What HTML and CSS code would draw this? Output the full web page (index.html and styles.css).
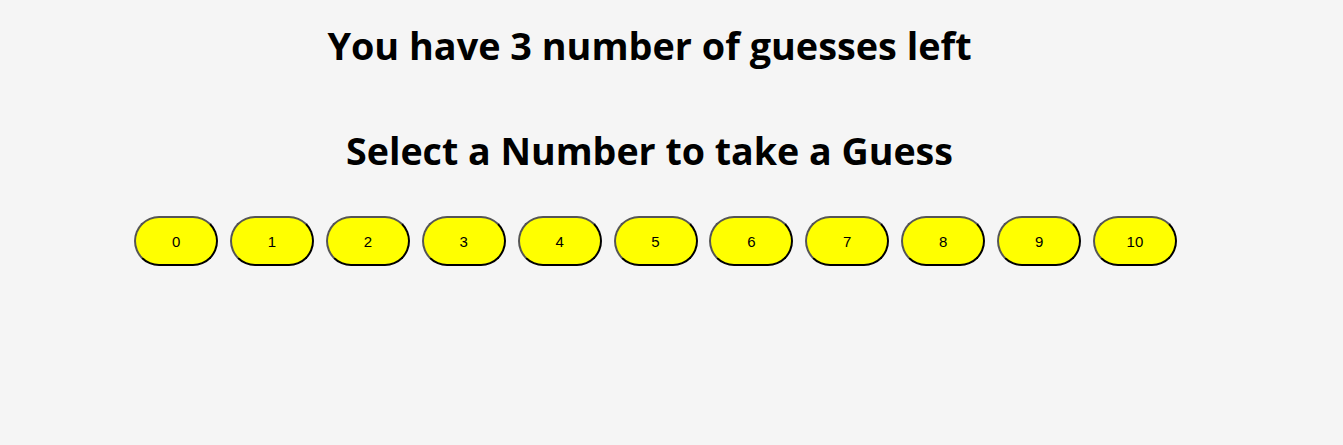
FILE: index.html
```html
<!DOCTYPE html>
<html>
<head>
<meta charset="utf-8">
<link rel="stylesheet" href="styles.css">
</head>
<body>
<main class="game">
  <h1 class="title">You have 3 number of guesses left</h1>
  <h2 class="subtitle">Select a Number to take a Guess</h2>
  <div class="numbers">
    <button class="num">0</button>
    <button class="num">1</button>
    <button class="num">2</button>
    <button class="num">3</button>
    <button class="num">4</button>
    <button class="num">5</button>
    <button class="num">6</button>
    <button class="num">7</button>
    <button class="num">8</button>
    <button class="num">9</button>
    <button class="num">10</button>
  </div>
</main>
</body>
</html>
```
FILE: styles.css
```css
html, body {
  margin: 0;
  background: #f5f5f5;
}
.game {
  display: flex;
  flex-direction: column;
  align-items: center;
  padding-right: 44px;
  font-family: "Open Sans", "Noto Sans", sans-serif;
  color: #000;
}
.title {
  margin: 21px 0 0;
  font-size: 37.8px;
  font-weight: 700;
  line-height: 50px;
}
.subtitle {
  margin: 55px 0 0;
  font-size: 37.6px;
  font-weight: 700;
  line-height: 50px;
}
.numbers {
  display: flex;
  gap: 11.9px;
  margin-top: 40px;
  padding-left: 12px;
}
.num {
  width: 84px;
  height: 50px;
  border-radius: 25px;
  background: #ffff00;
  border: 2px outset #555;
  font-family: "Liberation Sans", Arial, sans-serif;
  font-size: 15px;
  color: #000;
  padding: 0;
}
```
